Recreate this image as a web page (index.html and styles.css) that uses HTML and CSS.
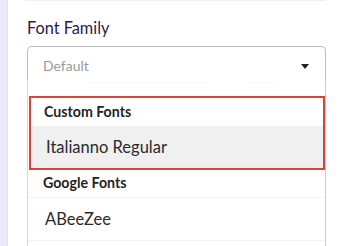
FILE: index.html
```html
<!DOCTYPE html>
<html>
<head>
<meta charset="utf-8">
<link rel="stylesheet" href="styles.css">
</head>
<body>
<div class="page">
  <div class="strip"></div>
  <div class="main">
    <div class="prev"></div>
    <div class="label">Font Family</div>
    <div class="select">
      <span class="placeholder">Default</span>
      <svg class="caret" width="8" height="5" viewBox="0 0 8 5"><path d="M0 0h8L4 5z" fill="#222"/></svg>
    </div>
    <div class="list">
      <div class="cut"><i class="mark"></i><i class="mark short"></i></div>
      <div class="group selected">
        <div class="group-head">Custom Fonts</div>
        <div class="option active">Italianno Regular</div>
      </div>
      <div class="group-head plain">Google Fonts</div>
      <div class="option plain">ABeeZee</div>
    </div>
  </div>
</div>
</body>
</html>
```
FILE: styles.css
```css
html, body { margin: 0; padding: 0; background: #fff; }
body { font-family: Lato, "Noto Sans", sans-serif; width: 350px; height: 246px; overflow: hidden; }
.page { display: flex; height: 246px; }
.strip { width: 7px; background: #efe9f8; border-right: 1px solid #e6def2; flex: none; }
.main { flex: none; width: 299px; margin-left: 19px; display: flex; flex-direction: column; }
.prev { height: 1px; background: #f0f0f0; margin-left: -2px; }
.label { margin-top: 15px; font-size: 16.3px; line-height: 24px; color: #2a1b47; height: 24px; }
.select { margin-top: 6px; height: 33px; border: 1px solid #bdbdbd; border-bottom: none; border-radius: 5px 5px 0 0; display: flex; align-items: center; justify-content: space-between; padding: 0 16px 0 15px; }
.placeholder { color: #9a9a9a; font-size: 14px; padding-top: 4px; }
.caret { margin-top: 6px; }
.list { border-left: 1px solid #c9dce6; border-right: 1px solid #b9d3df; flex: 1; overflow: hidden; }
.cut { height: 16px; display: flex; align-items: flex-start; gap: 40px; padding: 2px 0 0 60px; box-sizing: border-box; }
.mark { display: block; width: 120px; height: 1px; border-top: 1px dotted #f1f1f1; }
.mark.short { width: 30px; }
.group.selected { margin-left: 1px; border: 2px solid #d8433a; }
.group-head { font-weight: 700; font-size: 14.2px; color: #1f1f1f; height: 28px; line-height: 28px; padding-left: 13px; box-sizing: border-box; }
.option { font-size: 16.5px; color: #2a2a2a; height: 42px; line-height: 42px; padding-left: 15px; }
.option.active { background: #f0f0f0; }
.group-head.plain { padding-left: 15px; border-bottom: 1px solid #f3f3f3; height: 28px; line-height: 26px; }
.option.plain { padding-left: 17px; border-bottom: 1px solid #f3f3f3; }
```
